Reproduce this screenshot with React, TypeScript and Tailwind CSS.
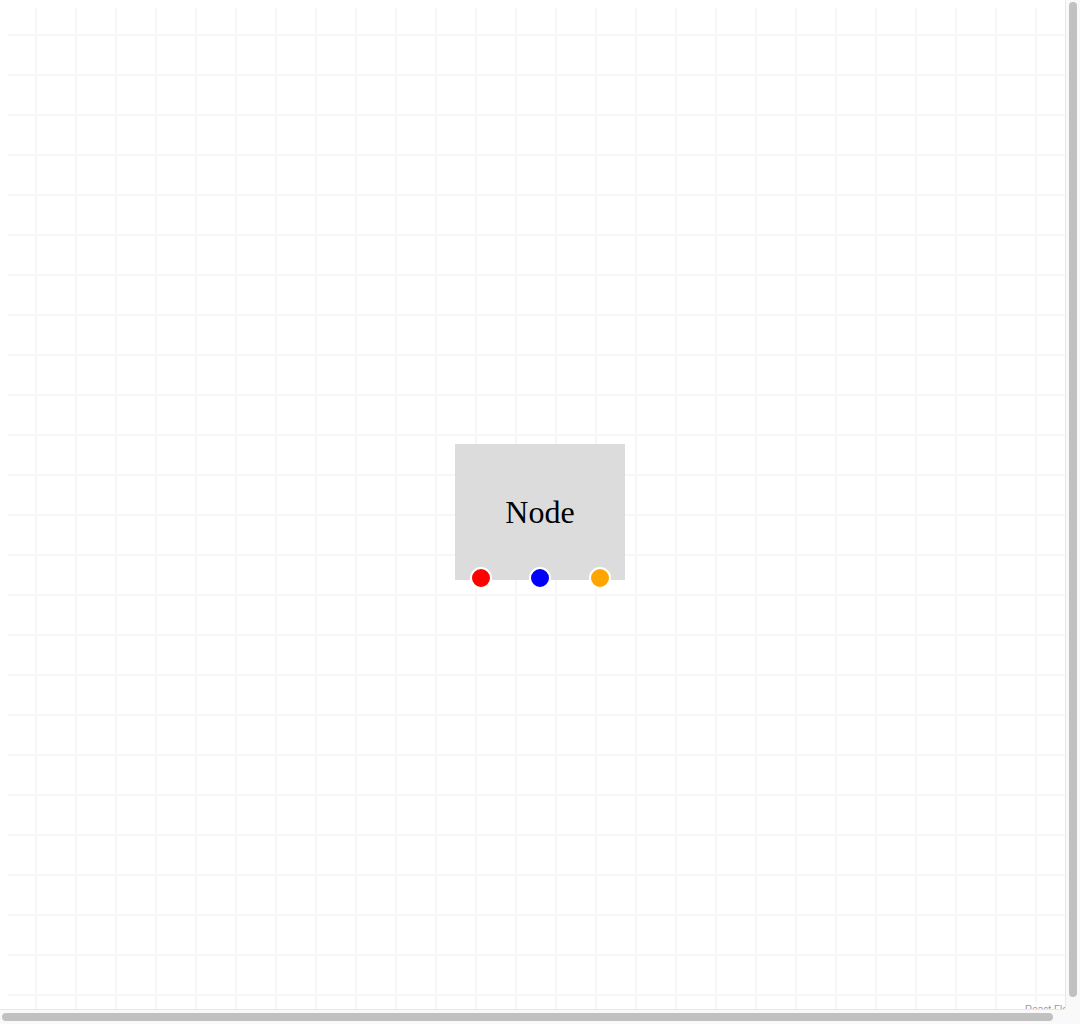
const handles = [
  { left: 'left-[15%]', color: 'bg-[#ff0000]' },
  { left: 'left-[50%]', color: 'bg-[#0000ff]' },
  { left: 'left-[85%]', color: 'bg-[#ffa500]' },
];

function FlowNode() {
  return (
    <div className="absolute left-[447px] top-[436px] w-[170px] h-[136px] bg-[#dcdcdc] flex items-center justify-center">
      <span className="text-[32px] leading-none text-black font-['Liberation_Serif','Times_New_Roman',serif]">Node</span>
      {handles.map((h, i) => (
        <div
          key={i}
          className={`absolute bottom-[2px] ${h.left} w-[22px] h-[22px] -translate-x-1/2 translate-y-1/2 rounded-full border-2 border-white ${h.color}`}
        />
      ))}
    </div>
  );
}

export default function App() {
  return (
    <div className="w-[1080px] h-[1024px] grid grid-cols-[1065px_15px] grid-rows-[1009px_15px] bg-white">
      {/* canvas viewport */}
      <div className="overflow-hidden">
        <div className="p-2 w-max">
          <div className="relative w-[1070px] h-[1010px] overflow-hidden bg-white bg-[linear-gradient(to_right,#f6f6f6_2px,transparent_2px),linear-gradient(to_bottom,#f6f6f6_2px,transparent_2px)] bg-[size:40px_40px] bg-[position:27px_26px]">
            <FlowNode />
            <div className="absolute right-0 bottom-0 px-[3px] py-[2px] bg-white/50 text-[10px] leading-[12px] text-[#999] font-['Liberation_Sans',Arial,sans-serif]">
              React Flow
            </div>
          </div>
        </div>
      </div>
      {/* vertical scrollbar */}
      <div className="bg-[#f9f9f9] border-l border-[#e8e8e8] flex justify-center pt-[2px] pb-[12px]">
        <div className="w-[8px] h-full rounded-full bg-[#c1c1c1]" />
      </div>
      {/* horizontal scrollbar */}
      <div className="bg-[#f9f9f9] border-t border-[#e8e8e8] flex items-center pl-[2px] pr-[12px]">
        <div className="h-[8px] w-full rounded-full bg-[#c1c1c1]" />
      </div>
      <div className="bg-[#f9f9f9]" />
    </div>
  );
}
